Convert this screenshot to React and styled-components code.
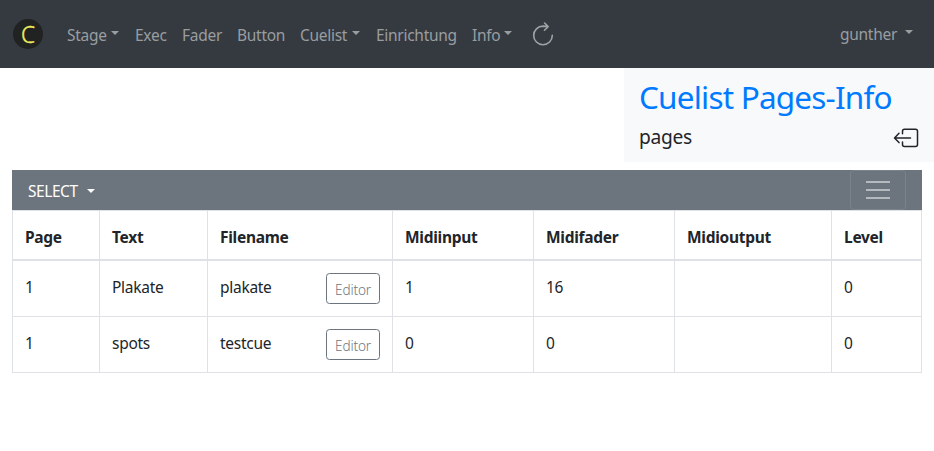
import React from 'react';
import styled, { createGlobalStyle } from 'styled-components';

const GlobalStyle = createGlobalStyle`
  * { box-sizing: border-box; }
  body {
    margin: 0;
    background: #fff;
    color: #212529;
    font: 400 15.5px/24px "Noto Sans", "Open Sans", sans-serif;
    letter-spacing: -0.28px;
  }
`;

const Navbar = styled.nav`
  display: flex;
  align-items: center;
  height: 68px;
  padding: 0 21px 0 13px;
  background: #343a40;
`;

const Logo = styled.svg`
  width: 30px;
  height: 30px;
  margin-right: 24px;
  overflow: visible;
`;

const NavLinks = styled.div`
  display: flex;
  align-items: center;
  gap: 16px;
  flex: 1;
`;

const NavLink = styled.a`
  display: flex;
  align-items: center;
  justify-content: space-between;
  width: ${(p) => p.$width}px;
  padding-top: 2px;
  color: #9a9da0;
  white-space: nowrap;
`;

const UserMenu = styled(NavLink)`
  padding-top: 0;
`;

const Caret = styled.span`
  margin-top: ${(p) => (p.$low ? -1 : -4)}px;
  border: 4.5px solid transparent;
  border-top-color: currentColor;
  border-bottom: 0;
`;

const ReloadIcon = styled.svg`
  width: 22px;
  height: 24px;
  margin-left: 4px;
`;

const InfoPanel = styled.header`
  width: 310px;
  height: 94px;
  margin-left: auto;
  padding: 10px 15px 0;
  background: #f8f9fa;
`;

const Title = styled.h1`
  margin: 0;
  color: #007bff;
  font-size: 31.5px;
  font-weight: 400;
  line-height: 38px;
  white-space: nowrap;
  letter-spacing: -0.8px;
`;

const SubtitleRow = styled.div`
  display: flex;
  justify-content: space-between;
  align-items: center;
  height: 40px;
  padding-top: 1px;
  font-size: 19.2px;
`;

const ExitIcon = styled.svg`
  width: 26px;
  height: 20px;
  margin-top: 2px;
`;

const Content = styled.main`
  margin: 8px 12px 0;
`;

const Toolbar = styled.div`
  display: flex;
  align-items: center;
  justify-content: space-between;
  height: 40px;
  padding: 0 16px;
  background: #6c757d;
  color: #fff;
`;

const SelectMenu = styled.a`
  display: flex;
  align-items: center;
  justify-content: space-between;
  width: 67px;
  margin-top: 2px;
  letter-spacing: -0.45px;
`;

const Toggler = styled.button`
  display: flex;
  flex-direction: column;
  align-items: center;
  justify-content: center;
  gap: 6px;
  width: 56px;
  height: 40px;
  padding: 0;
  border: 1px solid #7b838a;
  border-radius: 4px;
  background: none;
`;

const TogglerBar = styled.span`
  width: 24px;
  height: 2px;
  background: #b5babe;
`;

const Table = styled.div`
  border: solid #dee2e6;
  border-width: 1px 0 0 1px;
`;

const Row = styled.div`
  display: grid;
  grid-template-columns: 87px 108px 185px 141px 141px 157px 90px;
  height: ${(p) => (p.$head ? 50 : 56)}px;
  font-weight: ${(p) => (p.$head ? 700 : 400)};
`;

const Cell = styled.div`
  display: flex;
  justify-content: space-between;
  align-items: flex-start;
  padding: 14px 12px 0;
  border: solid #dee2e6;
  border-width: 0 1px ${(p) => (p.$head ? 2 : 1)}px 0;
`;

const EditorButton = styled.button`
  width: 54px;
  height: 31px;
  margin-top: -2px;
  padding: 2px 0 0;
  border: 1px solid #6c757d;
  border-radius: 3.5px;
  background: #fff;
  color: #6c757d;
  font: 350 13.6px/20px "Noto Sans", "Open Sans", sans-serif;
  letter-spacing: -0.15px;
`;

const links = [
  { label: 'Stage', width: 52, caret: true },
  { label: 'Exec', width: 31 },
  { label: 'Fader', width: 39 },
  { label: 'Button', width: 47 },
  { label: 'Cuelist', width: 60, caret: true },
  { label: 'Einrichtung', width: 80 },
  { label: 'Info', width: 40, caret: true },
];

const columns = ['Page', 'Text', 'Filename', 'Midiinput', 'Midifader', 'Midioutput', 'Level'];

const rows = [
  ['1', 'Plakate', 'plakate', '1', '16', '', '0'],
  ['1', 'spots', 'testcue', '0', '0', '', '0'],
];

export default function App() {
  return (
    <>
      <GlobalStyle />
      <Navbar>
        <Logo viewBox="0 0 30 30">
          <circle cx="15" cy="15" r="15" fill="#212322" />
          <text x="8" y="23.6" fontFamily="Noto Sans, sans-serif" fontSize="24" fontWeight="300" fill="#f1ee5c" stroke="#f1ee5c" strokeWidth="0.4" letterSpacing="0" textLength="14" lengthAdjust="spacingAndGlyphs">C</text>
        </Logo>
        <NavLinks>
          {links.map((l) => (
            <NavLink key={l.label} $width={l.width}>
              <span>{l.label}</span>
              {l.caret && <Caret />}
            </NavLink>
          ))}
          <ReloadIcon viewBox="0 0 22 24" fill="none" stroke="#a0a3a6" strokeWidth="1.6" strokeLinecap="round" strokeLinejoin="round">
            <path d="M15.9 4.6L11 4.1A9.3 9.3 0 1 0 20.3 13.4M12.6 1l3.5 3.6-3.6 3.6" />
          </ReloadIcon>
        </NavLinks>
        <UserMenu $width={73}>
          <span>gunther</span>
          <Caret />
        </UserMenu>
      </Navbar>
      <InfoPanel>
        <Title>Cuelist Pages-Info</Title>
        <SubtitleRow>
          <span>pages</span>
          <ExitIcon viewBox="0 0 26 20" fill="none" stroke="#212529" strokeWidth="1.5" strokeLinecap="round" strokeLinejoin="round">
            <path d="M9.5 5.7V3.2a2 2 0 0 1 2-2h11a2 2 0 0 1 2 2v13.3a2 2 0 0 1-2 2h-11a2 2 0 0 1-2-2v-2.4M17.5 9.9H1.8M6 5.2L1.5 9.9 6 14.6" />
          </ExitIcon>
        </SubtitleRow>
      </InfoPanel>
      <Content>
        <Toolbar>
          <SelectMenu>
            <span>SELECT</span>
            <Caret $low />
          </SelectMenu>
          <Toggler aria-label="Menu">
            <TogglerBar />
            <TogglerBar />
            <TogglerBar />
          </Toggler>
        </Toolbar>
        <Table>
          <Row $head>
            {columns.map((c) => (
              <Cell $head key={c}>{c}</Cell>
            ))}
          </Row>
          {rows.map((row, r) => (
            <Row key={r}>
              {row.map((value, i) => (
                <Cell key={columns[i]}>
                  <span>{value}</span>
                  {i === 2 && <EditorButton>Editor</EditorButton>}
                </Cell>
              ))}
            </Row>
          ))}
        </Table>
      </Content>
    </>
  );
}
